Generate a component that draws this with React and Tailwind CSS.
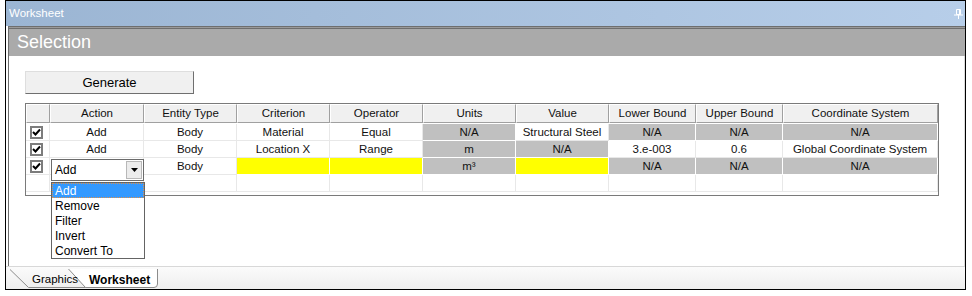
import React from 'react';

const COLS = 'grid grid-cols-[24px_94px_93px_93px_93px_93px_93px_87px_87px_155px]';

const HEADERS = ['', 'Action', 'Entity Type', 'Criterion', 'Operator', 'Units', 'Value', 'Lower Bound', 'Upper Bound', 'Coordinate System'];

// k: '' plain, 'g' read-only gray, 'y' missing (yellow)
const ROWS = [
  [
    { t: 'Add' }, { t: 'Body' }, { t: 'Material' }, { t: 'Equal' }, { t: 'N/A', k: 'g' },
    { t: 'Structural Steel' }, { t: 'N/A', k: 'g' }, { t: 'N/A', k: 'g' }, { t: 'N/A', k: 'g' },
  ],
  [
    { t: 'Add' }, { t: 'Body' }, { t: 'Location X' }, { t: 'Range' }, { t: 'm', k: 'g' },
    { t: 'N/A', k: 'g' }, { t: '3.e-003' }, { t: '0.6' }, { t: 'Global Coordinate System' },
  ],
  [
    { t: '', k: 'combo' }, { t: 'Body' }, { t: '', k: 'y' }, { t: '', k: 'y' }, { t: 'm³', k: 'g' },
    { t: '', k: 'y' }, { t: 'N/A', k: 'g' }, { t: 'N/A', k: 'g' }, { t: 'N/A', k: 'g' },
  ],
];

const ACTIONS = ['Add', 'Remove', 'Filter', 'Invert', 'Convert To'];

function Check() {
  return (
    <div className="w-[13px] h-[13px] border-2 border-[#7c7c7c] bg-white flex items-center justify-center">
      <svg width="9" height="9" viewBox="0 0 9 9">
        <path d="M1 4 L3.5 6.5 L8 1.5" stroke="#000" strokeWidth="2" fill="none" />
      </svg>
    </div>
  );
}

function ActionCombo() {
  return (
    <>
      <div className="absolute top-[1px] left-[1px] w-[93px] h-[22px] z-10 bg-white border border-[#6b6b6b] flex items-center">
        <span className="flex-1 pl-[3px] text-[12px] text-black">Add</span>
        <div className="w-[16px] h-[18px] mr-[1px] bg-[#ececec] border border-[#b8b8b8] flex items-center justify-center">
          <svg width="7" height="4" viewBox="0 0 7 4">
            <path d="M0 0 H7 L3.5 4 Z" fill="#000" />
          </svg>
        </div>
      </div>
      <div className="absolute top-[24px] left-[1px] w-[94px] z-10 bg-white border border-[#646464] flex flex-col">
        {ACTIONS.map((a, i) => (
          <div
            key={a}
            className={
              i === 0
                ? 'h-[15px] pl-[2px] flex items-center text-[12px] text-white bg-[#3399ff] border border-dotted border-[#e0904a]'
                : 'h-[15px] pl-[2px] flex items-center text-[12px] text-black border border-transparent'
            }
          >
            {a}
          </div>
        ))}
      </div>
    </>
  );
}

function DataCell({ c }) {
  if (c.k === 'combo') {
    return <div className="relative h-[17px] border-r border-b border-[#e8e8e8]"><ActionCombo /></div>;
  }
  const bg =
    c.k === 'g'
      ? 'h-[17px] pt-[1px] flex items-center justify-center bg-[#c0c0c0] border-r border-b border-white'
      : c.k === 'y'
      ? 'h-[17px] pt-[1px] flex items-center justify-center bg-[#ffff00] border-r border-b border-white'
      : 'h-[17px] pt-[1px] flex items-center justify-center border-r border-b border-[#e8e8e8]';
  return <div className={bg}>{c.t}</div>;
}

function Table() {
  return (
    <div className="mt-[9px] ml-[16px] w-[914px] border border-[#7a7a7a] bg-white pb-[3px] text-[11.5px] text-[#111]">
      <div className={COLS + ' h-[18px]'}>
        {HEADERS.map((h, i) => (
          <div
            key={i}
            className="flex items-center justify-center bg-[#f0f0f0] border border-t-white border-l-white border-r-[#a0a0a0] border-b-[#a0a0a0]"
          >
            {h}
          </div>
        ))}
      </div>
      <div className="mt-[2px]">
        {ROWS.map((r, ri) => (
          <div key={ri} className={COLS}>
            <div className="h-[17px] pl-[4px] flex items-center border-r border-b border-[#e8e8e8]">
              <Check />
            </div>
            {r.map((c, ci) => (
              <DataCell key={ci} c={c} />
            ))}
          </div>
        ))}
        <div className={COLS}>
          {HEADERS.map((_, i) => (
            <div key={i} className="h-[17px] border-r border-b border-[#e8e8e8]" />
          ))}
        </div>
      </div>
    </div>
  );
}

function TabStrip() {
  return (
    <div className="relative h-[23px] border-t border-[#d8d8d8] bg-gradient-to-b from-[#fbfbfb] to-[#eeeeee]">
      <svg className="absolute inset-0" width="958" height="22" viewBox="0 0 958 22">
        <path d="M4 2.5 L22.5 20.5 H80" stroke="#8c8c8c" fill="none" />
        <path d="M62.5 2 L79.5 20.5 H148 Q151.5 20.5 151.5 17 V2 Z" fill="#ffffff" />
        <path d="M62.5 2 L79.5 20.5 H148 Q151.5 20.5 151.5 17 V2" stroke="#8c8c8c" fill="none" />
      </svg>
      <div className="relative flex items-center h-full pl-[26px] pt-[3px]">
        <span className="w-[57px] text-[11.5px] text-black">Graphics</span>
        <span className="text-[12px] font-bold text-black">Worksheet</span>
      </div>
    </div>
  );
}

export default function App() {
  return (
    <div className="w-[972px] h-[296px] bg-white font-['Liberation_Sans',Arial,sans-serif]">
      <div className="ml-[5px] w-[961px] h-[290px] border border-black flex flex-col">
        {/* title bar */}
        <div className="h-[25px] shrink-0 flex items-center justify-between pl-[3px] pr-[2px] bg-gradient-to-r from-[#9bb5d3] to-[#b7cee9]">
          <span className="text-[11.5px] text-white">Worksheet</span>
          <svg width="9" height="10" viewBox="0 0 9 10">
            <path d="M2.5 0.5 H6.5 V5.5 H2.5 Z" stroke="#fff" fill="none" />
            <path d="M5.5 0.5 V5.5" stroke="#fff" />
            <path d="M0 6 H9" stroke="#fff" />
            <path d="M4.5 6 V10" stroke="#fff" />
          </svg>
        </div>

        {/* panel */}
        <div className="flex-1 flex flex-col pl-[2px]">
          <div className="flex-1 flex flex-col border-l border-[#6d6d6d]">
            <div className="h-[1px] bg-[#6e6e6e]" />
            <div className="h-[1px] bg-[#9a9a9a]" />
            <div className="h-[1px] bg-[#6e6e6e]" />
            <div className="h-[27px] flex items-center pl-[8px] bg-[#aaaaaa]">
              <span className="text-[18px] text-white">Selection</span>
            </div>
            <div className="flex-1 bg-white border-r border-[#dcdcdc]">
              <button className="mt-[15px] ml-[16px] w-[169px] h-[23px] bg-[#f0f0f0] border border-t-[#dedede] border-l-[#dedede] border-r-[#6f6f6f] border-b-[#6f6f6f] text-[13px] text-black">
                Generate
              </button>
              <Table />
            </div>
          </div>
        </div>

        <TabStrip />
      </div>
    </div>
  );
}
